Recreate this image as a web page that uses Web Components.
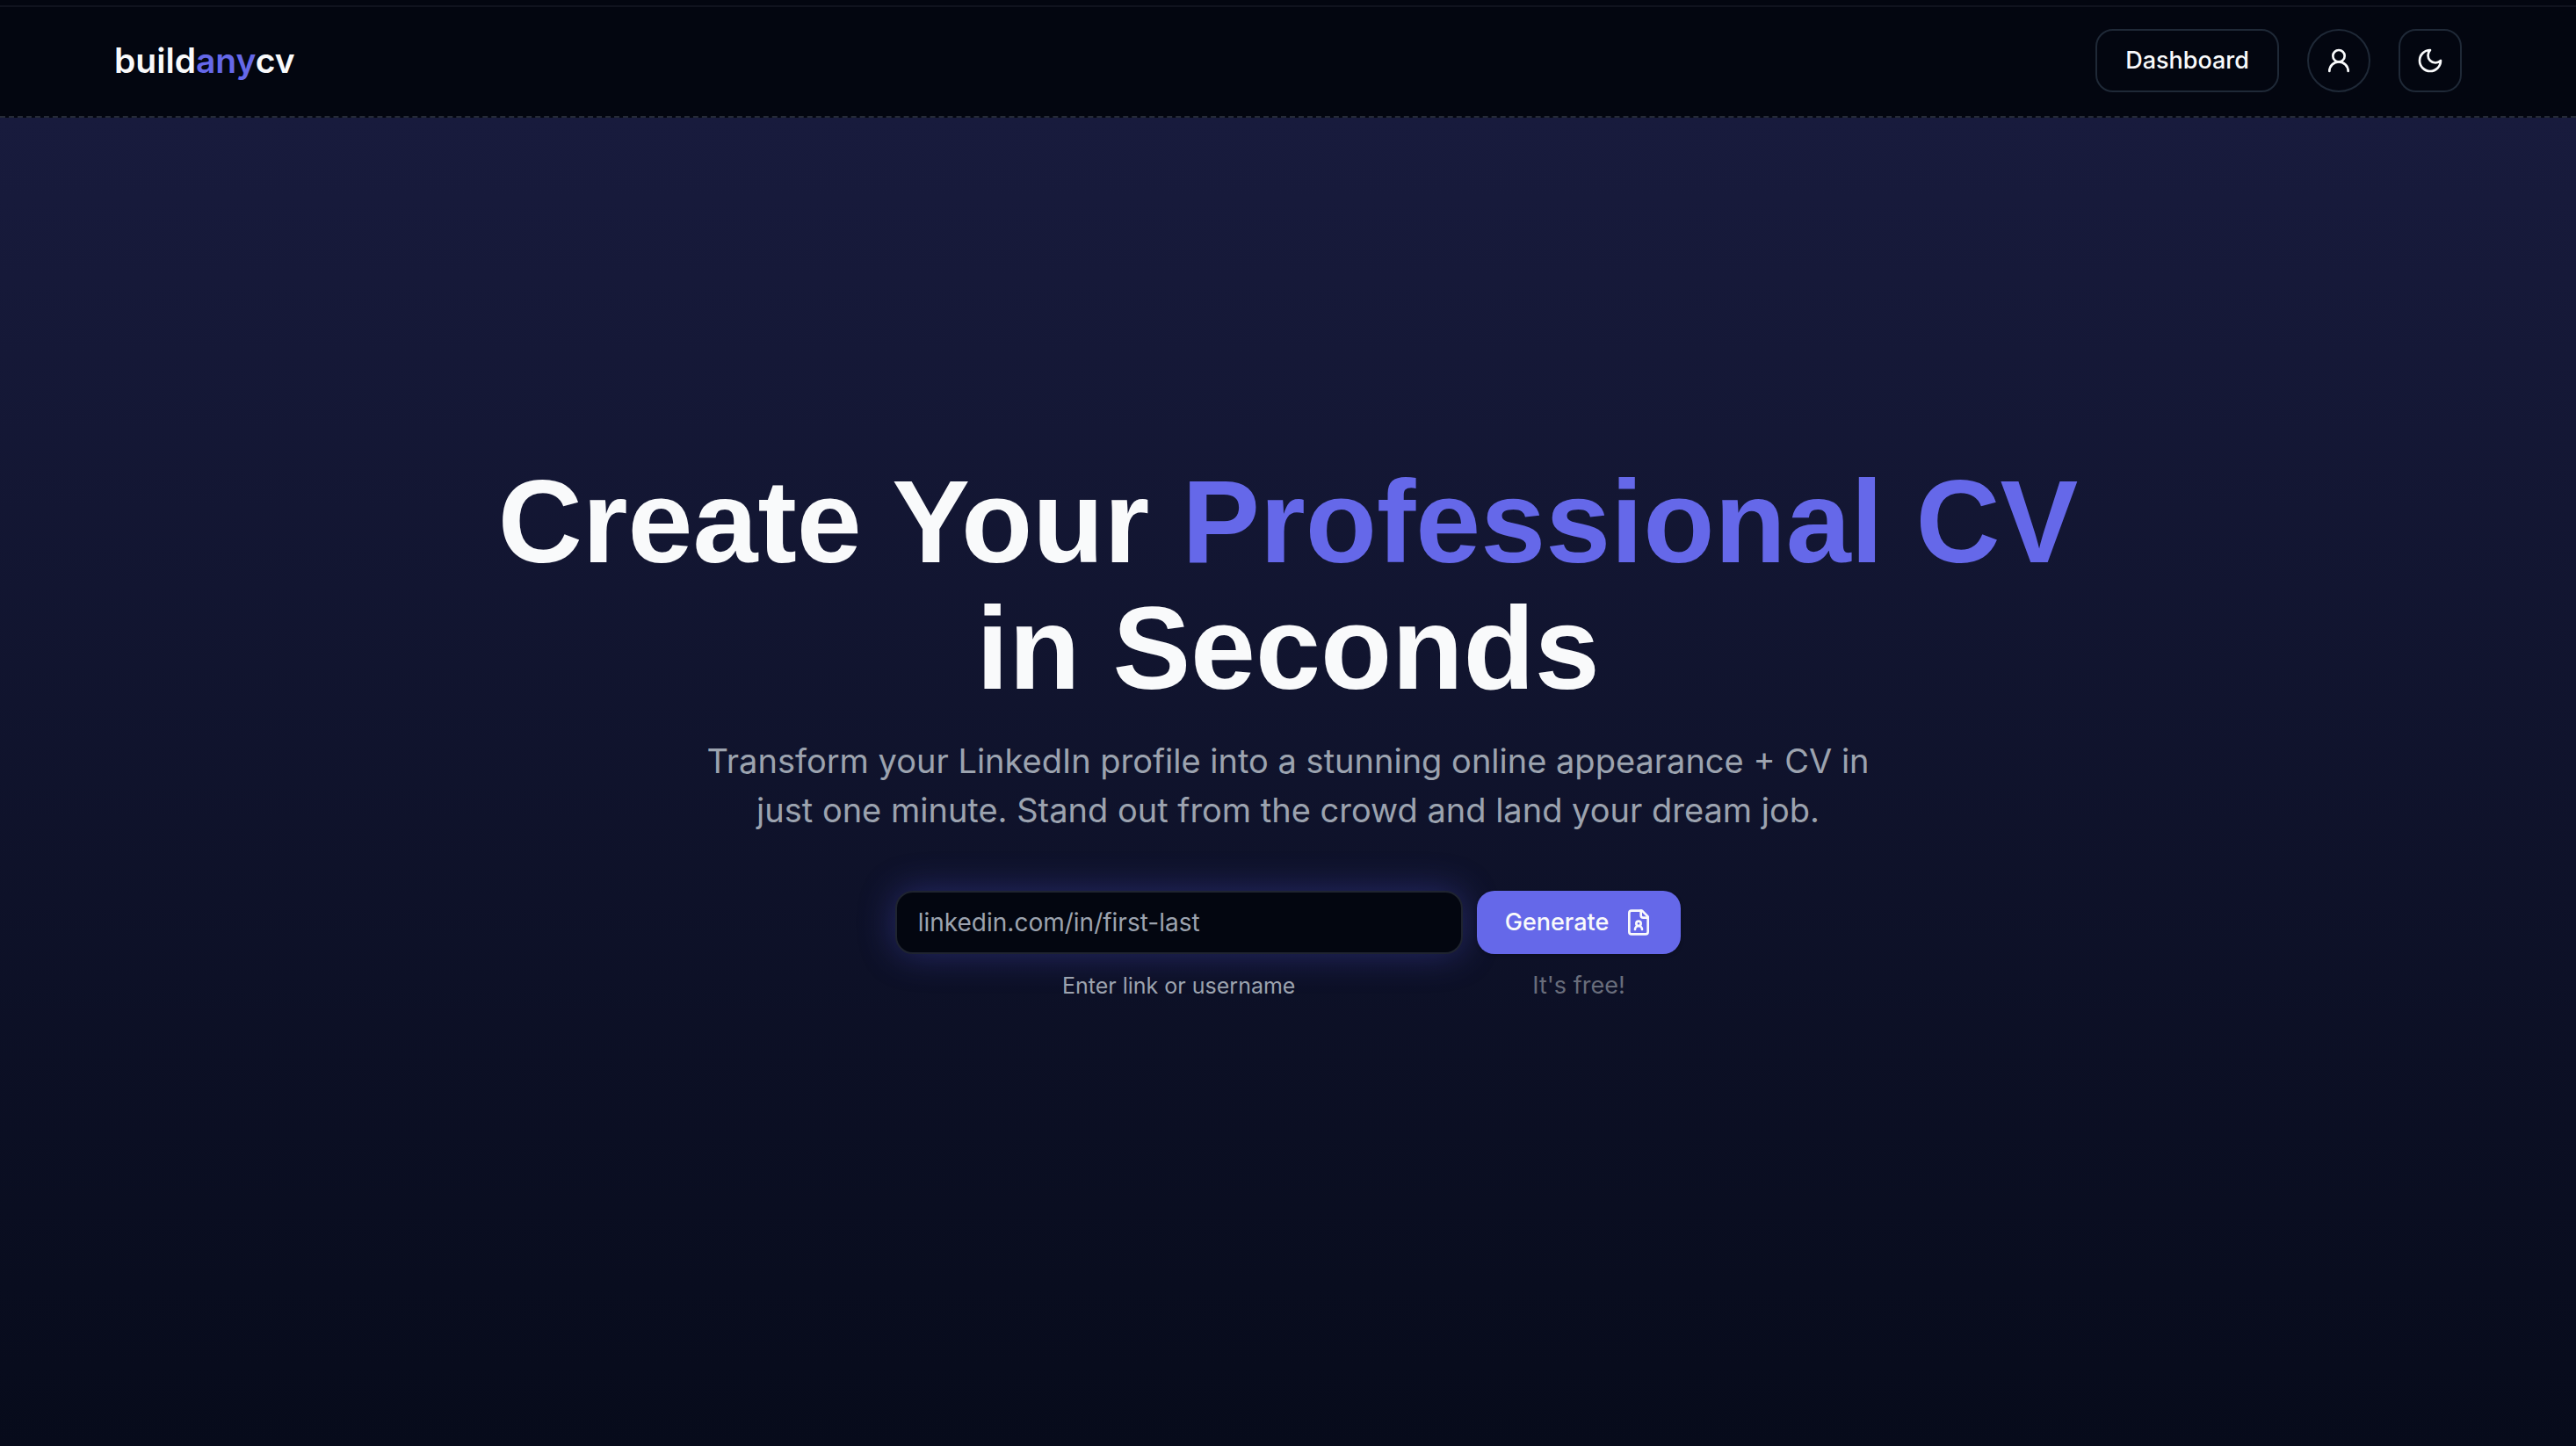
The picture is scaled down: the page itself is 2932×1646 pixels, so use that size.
<!DOCTYPE html>
<html lang="en">
<head>
<meta charset="utf-8">
<title>buildanycv</title>
<style>
html{height:100%}
body{margin:0;min-height:100%;display:flex;background:#030712;color:#f9fafb;font-family:Inter,"Liberation Sans",sans-serif;font-size:28px;
--accent:#6568e9;--line:#1f2937;--muted:#9ca3af}
</style>
</head>
<body>
<cv-app></cv-app>
<script>
const define=(name,html)=>customElements.define(name,class extends HTMLElement{
  constructor(){super();const t=document.createElement('template');t.innerHTML=html;this.attachShadow({mode:'open'}).append(t.content.cloneNode(true))}
});
const icons={
 user:'<circle cx="12" cy="8" r="5"/><path d="M20 21a8 8 0 0 0-16 0"/>',
 moon:'<path d="M12 3a6 6 0 0 0 9 9 9 9 0 1 1-9-9Z"/>',
 file:'<path d="M14 2v4a2 2 0 0 0 2 2h4"/><path d="M15 18a3 3 0 1 0-6 0"/><path d="M15 2H6a2 2 0 0 0-2 2v16a2 2 0 0 0 2 2h12a2 2 0 0 0 2-2V7z"/><circle cx="12" cy="13" r="2"/>'
};
customElements.define('cv-glyph',class extends HTMLElement{
  connectedCallback(){if(this.shadowRoot)return;this.attachShadow({mode:'open'}).innerHTML=`<style>:host{display:block;width:32px;height:32px;flex:none}svg{display:block;width:100%;height:100%;fill:none;stroke:currentColor;stroke-width:2;stroke-linecap:round;stroke-linejoin:round}</style><svg viewBox="0 0 24 24" aria-hidden="true">${icons[this.getAttribute('name')]}</svg>`}
});
define('cv-logo',`<style>:host{display:block}a{color:inherit;text-decoration:none;font-size:39px;font-weight:600;line-height:56px}span{color:var(--accent)}</style><a href="#">build<span>any</span>cv</a>`);
define('cv-header',`<style>
:host{display:block;padding-top:6px;background:#030610}
header{display:flex;align-items:center;justify-content:space-between;padding:27px 130px;border-bottom:2px dashed #262b37;box-shadow:inset 0 2px #10131e}
nav{display:flex;gap:32px}
a,button{box-sizing:border-box;height:72px;border:2px solid var(--line);border-radius:20px;background:none;color:inherit;font:500 27px/40px Inter,"Liberation Sans",sans-serif;display:flex;align-items:center;justify-content:center;text-decoration:none;padding:0 32px}
button{width:72px;padding:0}
.round{border-radius:50%}
</style><header><cv-logo></cv-logo><nav><a href="#">Dashboard</a><button class="round" aria-label="Account"><cv-glyph name="user"></cv-glyph></button><button aria-label="Toggle theme"><cv-glyph name="moon"></cv-glyph></button></nav></header>`);
define('cv-generate-form',`<style>
:host{display:block}
form{display:grid;grid-template-columns:646px auto;column-gap:16px;row-gap:16px;justify-content:center;justify-items:center;margin:0}
input{box-sizing:border-box;width:100%;height:72px;border:2px solid #1f2430;border-radius:20px;background:#030610;color:#f9fafb;padding:0 24px;font:400 28px/40px Inter,sans-serif;box-shadow:0 0 40px rgba(79,82,210,.38);outline:none}
input::placeholder{color:var(--muted);opacity:1}
button{height:72px;border:0;border-radius:20px;background:var(--accent);color:#f9fafb;padding:0 32px;font:500 27px/40px Inter,sans-serif;display:flex;align-items:center;gap:18px;box-shadow:0 2px 4px rgba(0,0,0,.2)}
label,p{margin:0;color:var(--muted);line-height:40px}
label{font-size:25px}
p{color:#696d7b;font-size:27px}
</style><form><input id="link" type="text" placeholder="linkedin.com/in/first-last"><button type="button">Generate <cv-glyph name="file"></cv-glyph></button><label for="link">Enter link or username</label><p>It's free!</p></form>`);
define('cv-hero',`<style>
:host{display:block;flex:1;background:linear-gradient(#181b3d,#070b1b);padding:388px 32px 0;text-align:center}
h1{margin:0 auto;max-width:1840px;font:700 133px/144px "Liberation Sans",Arial,sans-serif}
h1 span{color:var(--accent)}
p{margin:28px auto 64px;max-width:1360px;font-size:38px;line-height:56px;color:var(--muted)}
</style><h1>Create Your <span>Professional CV</span> in Seconds</h1><p><slot></slot></p><cv-generate-form></cv-generate-form>`);
define('cv-app',`<style>:host{flex:1;min-width:0;display:flex;flex-direction:column}</style><cv-header></cv-header><cv-hero>Transform your LinkedIn profile into a stunning online appearance + CV in just one minute. Stand out from the crowd and land your dream job.</cv-hero>`);
</script>
</body>
</html>
